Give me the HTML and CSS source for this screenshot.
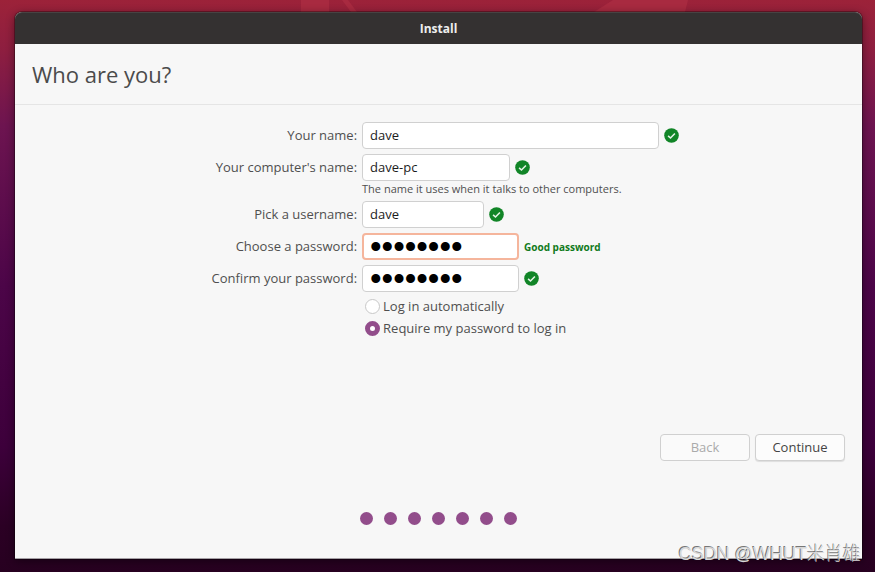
FILE: index.html
```html
<!DOCTYPE html>
<html lang="en">
<head>
<meta charset="utf-8">
<title>Install</title>
<link rel="stylesheet" href="styles.css">
</head>
<body>
<svg class="wallpaper" viewBox="0 0 875 12" preserveAspectRatio="none" aria-hidden="true">
  <path d="M301 0h28v12h-28zM342 0h6l9 12h-6zM613 0h75l-3 12h-91z" fill="#a82a40"/>
</svg>
<svg class="symbols" aria-hidden="true">
  <symbol id="ok" viewBox="0 0 15 15">
    <circle cx="7.5" cy="7.5" r="7.3" fill="#118527"/>
    <path d="M4.1 7.8l2.4 2.2 4.4-4.5" fill="none" stroke="#e4f3e6" stroke-width="1.6"/>
  </symbol>
</svg>
<main class="window">
  <header class="titlebar">Install</header>
  <h1 class="heading">Who are you?</h1>
  <form class="content">
    <div class="fields">
      <label for="name">Your name:</label>
      <div class="field"><input class="entry wide" id="name" type="text" value="dave"><svg class="ok"><use href="#ok"/></svg></div>

      <label for="computer">Your computer's name:</label>
      <div class="field"><input class="entry medium" id="computer" type="text" value="dave-pc"><svg class="ok"><use href="#ok"/></svg></div>
      <p class="hint">The name it uses when it talks to other computers.</p>

      <label for="username">Pick a username:</label>
      <div class="field"><input class="entry narrow" id="username" type="text" value="dave"><svg class="ok"><use href="#ok"/></svg></div>

      <label for="password">Choose a password:</label>
      <div class="field"><input class="entry secret active" id="password" type="password" value="password"><span class="strength">Good password</span></div>

      <label for="confirm">Confirm your password:</label>
      <div class="field"><input class="entry secret" id="confirm" type="password" value="password"><svg class="ok"><use href="#ok"/></svg></div>

      <div class="choices">
        <label class="choice"><input type="radio" name="login">Log in automatically</label>
        <label class="choice"><input type="radio" name="login" checked>Require my password to log in</label>
      </div>
    </div>
    <div class="actions">
      <button class="button" type="button" disabled>Back</button>
      <button class="button" type="button">Continue</button>
    </div>
    <div class="steps"><i></i><i></i><i></i><i></i><i></i><i></i><i></i></div>
  </form>
</main>
<div class="watermark">CSDN @WHUT米肖雄</div>
</body>
</html>
```
FILE: styles.css
```css
* { box-sizing: border-box; }

body {
  margin: 0;
  min-height: 100vh;
  padding: 12px 13px 13px 15px;
  display: flex;
  position: relative;
  background: linear-gradient(#9c2239 0%, #8d1e40 9%, #6d1450 22%, #4c0548 50%, #3d003b 78%, #2b0024 92%, #270020 100%);
  color: #4f4f4f;
  font: 13px/18px "Open Sans", "Noto Sans", sans-serif;
}

.wallpaper {
  position: absolute;
  top: 0;
  left: 0;
  width: 100%;
  height: 12px;
}

.symbols { position: absolute; width: 0; height: 0; }

.window {
  flex: 1;
  display: flex;
  flex-direction: column;
  position: relative;
  background: #f7f7f7;
  border-radius: 7px 7px 0 0;
  box-shadow: 0 0 0 1px #0000004d, 0 2px 10px #00000073;
}

.titlebar {
  height: 32px;
  border-radius: 7px 7px 0 0;
  background: #343131;
  border-top: 1px solid #474343;
  color: #eee;
  font-size: 12px;
  font-weight: 700;
  line-height: 31px;
  text-align: center;
}

.heading {
  margin: 0;
  padding: 14px 17px 13px;
  border-bottom: 1px solid #e5e5e5;
  color: #4b4b4b;
  font-size: 22px;
  font-weight: 400;
  line-height: 33px;
}

.content {
  flex: 1;
  display: flex;
  flex-direction: column;
  padding-top: 17px;
  border-bottom: 1px solid #a5a0a5;
}

.fields {
  display: grid;
  grid-template-columns: 13fr 19fr;
  gap: 5px;
}

.fields > label { text-align: right; line-height: 26px; }

.field { display: flex; align-items: center; gap: 5px; }

.entry {
  height: 27px;
  padding: 0 7px 1px;
  border: 1px solid #d0d0d0;
  border-radius: 4px;
  outline: 0;
  background: #fff;
  color: #1c1c1c;
  font: 13px "Open Sans", "Noto Sans", sans-serif;
}

.wide { width: 297px; }
.medium { width: 148px; }
.narrow { width: 122px; }
.secret { width: 157px; padding-bottom: 0; font: 33px/25px "Liberation Sans", sans-serif; color: #000; }
.active { border: 2px solid #f5b59c; padding: 0 6px; }

.ok { width: 15px; height: 15px; }

.hint {
  grid-column: 2;
  margin: -5px 0 0;
  font-size: 11px;
  line-height: 15px;
}

.strength { color: #117a20; font-size: 10px; font-weight: 700; }

.choices { grid-column: 2; display: grid; gap: 4px; }

.choice { display: flex; align-items: center; gap: 3px; padding-left: 3px; }

.choice input {
  appearance: none;
  width: 15px;
  height: 15px;
  margin: 0;
  border: 1px solid #c8c8c8;
  border-radius: 50%;
  background: #fff;
}

.choice input:checked { border: 5px solid #924d8b; }

.actions {
  display: flex;
  justify-content: flex-end;
  gap: 5px;
  margin-top: auto;
  padding-right: 17px;
}

.button {
  width: 90px;
  height: 27px;
  border: 1px solid #d0d0d0;
  border-radius: 4px;
  padding: 0 6px 1px;
  background: #fcfcfc;
  box-shadow: 0 1px 1px #0000001a;
  color: #444;
  font: 13px "Open Sans", "Noto Sans", sans-serif;
}

.button:disabled { color: #aaa; background: #fafafa; box-shadow: none; }

.steps {
  display: flex;
  justify-content: center;
  gap: 11px;
  padding: 51px 0 33px;
}

.steps i { width: 13px; height: 13px; border-radius: 50%; background: #924d8b; }

.watermark {
  position: absolute;
  right: 14px;
  bottom: 5px;
  color: #d8d8d8;
  font: 300 18px/26px "Liberation Sans", "Noto Sans CJK SC", sans-serif;
  text-shadow: -1px -1px 0 #777;
}
```
